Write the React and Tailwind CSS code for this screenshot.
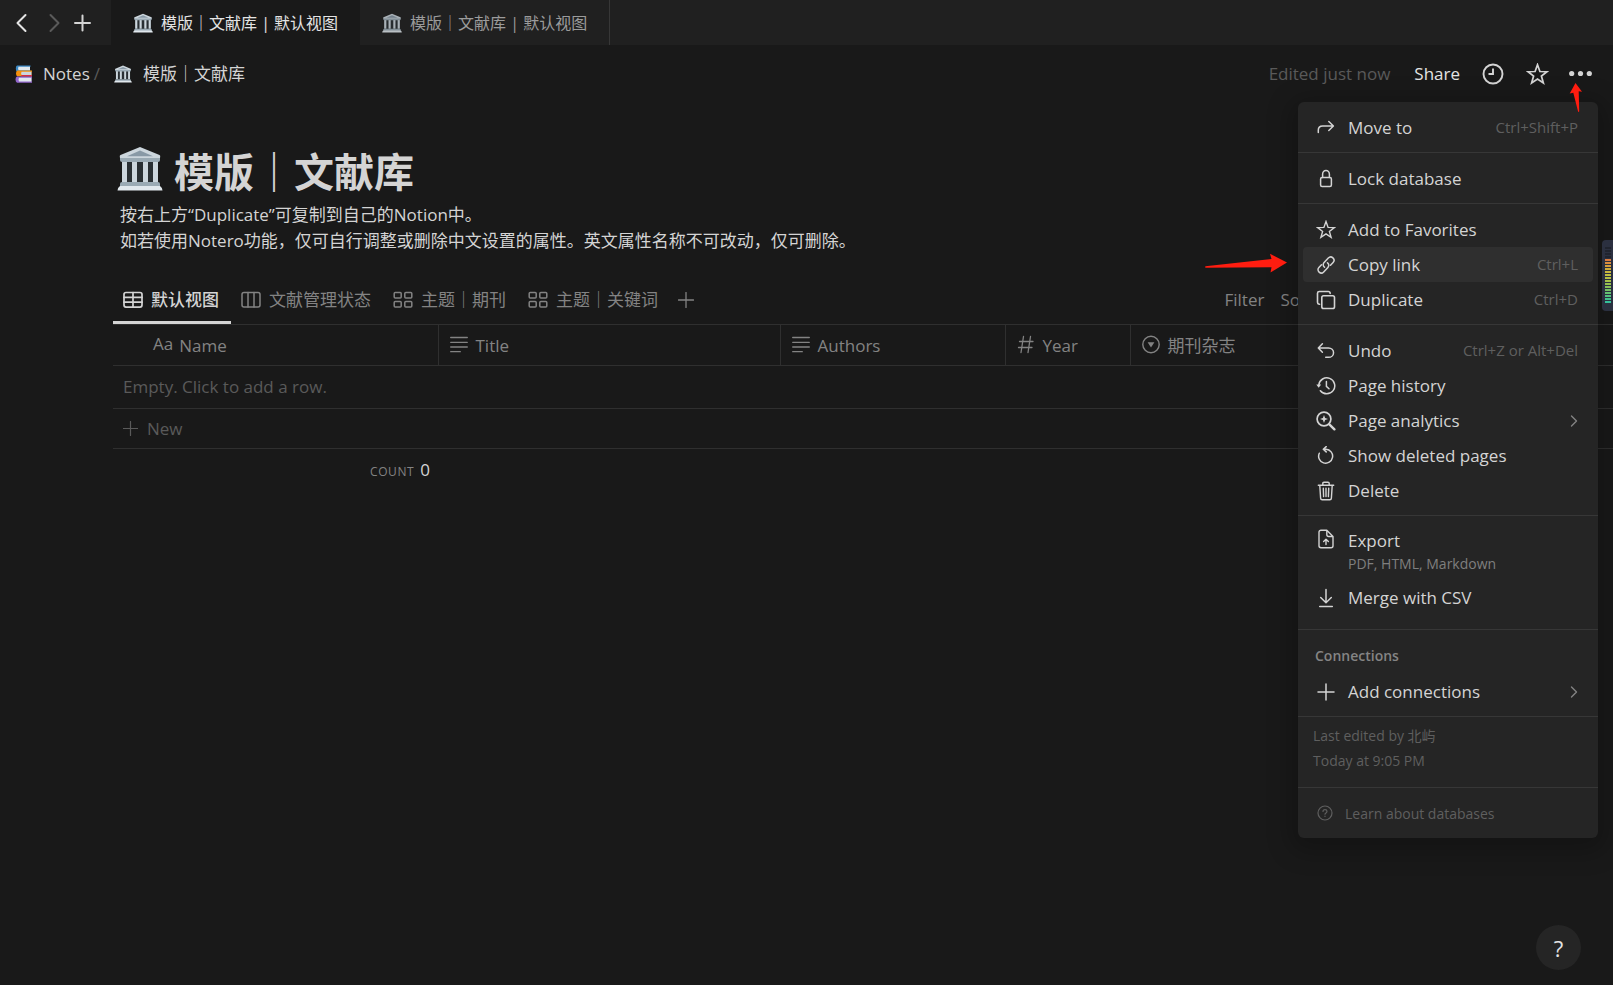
import React from "react";

function Svg({ className = "size-5", box = "0 0 20 20", children, width = 1.5 }) {
  return (
    <svg
      viewBox={box}
      className={`shrink-0 ${className}`}
      fill="none"
      stroke="currentColor"
      strokeWidth={width}
      strokeLinecap="round"
      strokeLinejoin="round"
      aria-hidden="true"
    >
      {children}
    </svg>
  );
}

function Museum({ className }) {
  return (
    <svg viewBox="0 0 46 45" className={`shrink-0 ${className}`} aria-hidden="true">
      <path d="M5 14h36v22H5z" fill="#292F33" />
      <path d="M5 14h5v22H5zM15 14h5v22h-5zM26 14h5v22h-5zM36 14h5v22h-5z" fill="#CCD6DD" />
      <path d="M3 11h40v3q0 2-2 2H5q-2 0-2-2z" fill="#9AAAB4" />
      <path d="M23 1 L42.500 9q1 .6 .7 1.800L43 12H3l-.2-1.200Q2.500 9.600 3.500 9z" fill="#CCD6DD" />
      <path d="M23 4.500 36 10.300H10z" fill="#8899A6" />
      <path d="M5 36h36q2 0 2 2v3H3v-3q0-2 2-2z" fill="#9AAAB4" />
      <path d="M3 40h40q2.500 1.500 2.500 4.500H.5Q.5 41.500 3 40z" fill="#E1E8ED" />
    </svg>
  );
}

function Books({ className }) {
  return (
    <svg viewBox="0 0 18 18" className={`shrink-0 ${className}`} aria-hidden="true">
      <path d="M2 .5h13.500v1.200H15v3.600h.5v1.200H2Q.8 6 .8 3.500T2 .5z" fill="#3B88C3" />
      <path d="M3.500 1.700H15v3.600H3.500Q2.600 3.500 3.500 1.700z" fill="#E1E8ED" />
      <path d="M2.500 5.500H17v1.200h-.5v3.400h.5v1.200H2.500Q1 10.800 1 8.400t1.500-2.900z" fill="#F4900C" />
      <path d="M6.500 6.700h10v3.400h-10q-.8-1.700 0-3.400z" fill="#CCD6DD" />
      <path d="M6.500 10.100H17v1.400H6z" fill="#DD2E44" />
      <path d="M2 11.500h15v1.300h-.5v3.600h.5v1.300H2Q.5 17 .5 14.600T2 11.500z" fill="#9266CC" />
      <path d="M4 12.800h12.500v3.600H4q-1-1.800 0-3.600z" fill="#E1E8ED" />
    </svg>
  );
}

const STAR = "M10 1.500l2.100 5.900 6.200.2-4.900 3.800 1.700 6-5.100-3.500-5.100 3.500 1.700-6-4.900-3.800 6.200-.2z";

const icons = {
  move: (
    <Svg>
      <path d="M2.300 14.500v-2.200q0-4.300 4.300-4.300H17.300M12.800 3.500 17.400 8l-4.600 4.500" />
    </Svg>
  ),
  lock: (
    <Svg>
      <rect x="4.600" y="8.600" width="10.800" height="9" rx="1.500" />
      <path d="M6.600 8.500V5.200a3.400 3.800 0 0 1 6.800 0v3.300" />
    </Svg>
  ),
  star: (
    <Svg>
      <path d={STAR} strokeLinejoin="miter" strokeWidth="1.400" />
    </Svg>
  ),
  link: (
    <Svg>
      <path d="M8.500 12.200c-1.600-1.300-1.700-3.200-.4-4.600l4.200-4.500c1.300-1.400 3.200-1.500 4.600-.2s1.500 3.200.2 4.600l-2.600 2.800" />
      <path d="M11.500 7.800c1.600 1.300 1.700 3.200.4 4.600l-4.200 4.500c-1.300 1.400-3.200 1.500-4.600.2s-1.500-3.200-.2-4.600l2.600-2.800" />
    </Svg>
  ),
  copy: (
    <Svg width={1.600}>
      <rect x="5.800" y="5.800" width="12.700" height="12.700" rx="1.800" />
      <path d="M3.600 14.200H3.200A2 2 0 0 1 1.500 12.200V3.200A1.800 1.800 0 0 1 3.300 1.500h8.900a2 2 0 0 1 2 1.900" />
    </Svg>
  ),
  undo: (
    <Svg>
      <path d="M6.400 2.800 2.300 7l4.100 4.200M2.500 7h10a5 4.600 0 0 1 0 9.300H9.700" />
    </Svg>
  ),
  history: (
    <Svg>
      <path d="M2.800 9a8 8 0 1 1 1.600 5.700M10.400 5.500v4.900l2.600 2.300" />
      <path d="M.3 8.500h4.900L2.700 11.700z" fill="currentColor" stroke="none" />
    </Svg>
  ),
  analytics: (
    <Svg>
      <circle cx="8" cy="8" r="6.900" strokeWidth="1.700" />
      <path d="M13.300 13.300 18.400 18.300" strokeWidth="2.400" />
      <path d="M8 4l1.100 2.900L12 8 9.100 9.100 8 12 6.900 9.100 4 8l2.900-1.100z" fill="currentColor" stroke="none" />
    </Svg>
  ),
  restore: (
    <Svg>
      <path d="M3.300 7.200a7 7 0 1 0 6.700-4H7.300M10.200.6 7.300 3.200l2.900 2.700" />
    </Svg>
  ),
  trash: (
    <Svg width={1.400}>
      <path d="M2.300 4.300h15.400M6.800 4V2.400q0-1.200 1.200-1.200h4q1.200 0 1.200 1.200V4M3.800 4.500l.8 12.600q.1 1.600 1.600 1.600h7.600q1.500 0 1.600-1.600l.8-12.600M7.300 7.300l.3 8.300M10 7.300v8.300M12.700 7.300l-.3 8.300" />
    </Svg>
  ),
  exportFile: (
    <Svg width={1.400}>
      <path d="M5 1.200h5.800l6.200 6.300V16.700a2 2 0 0 1-2 2H5a2 2 0 0 1-2-2V3.200a2 2 0 0 1 2-2zM10.800 1.400v4.200q0 1.900 1.900 1.900h4.200M10 15.600v-5M7.600 12.600 10 10.200l2.400 2.400" />
    </Svg>
  ),
  merge: (
    <Svg>
      <path d="M10 1.500v13M4.700 9.500 10 14.700l5.300-5.200M3.700 18.500h12.600" />
    </Svg>
  ),
  plus: (
    <Svg>
      <path d="M10 2v16M2 10h16" />
    </Svg>
  ),
};

function MenuItem({ icon, label, hint, more, active }) {
  return (
    <li>
      <button
        type="button"
        role="menuitem"
        className={`flex h-[35px] w-full items-center gap-3 rounded pr-[15px] pl-[13px] text-left ${
          active ? "bg-[#2f2f2f]" : ""
        }`}
      >
        {icons[icon]}
        <span className="flex-1 pt-px">{label}</span>
        {hint && <span className="text-[15px] text-[#5f5f5f]">{hint}</span>}
        {more && (
          <Svg className="h-3 w-2 text-[#838383]" box="0 0 8 12" width={1.400}>
            <path d="M1.500 1 6.500 6l-5 5" />
          </Svg>
        )}
      </button>
    </li>
  );
}

function Section({ children }) {
  return <ul className="border-b border-[#373737] px-[5px] pt-2 pb-[7px]">{children}</ul>;
}

function PageMenu() {
  return (
    <div
      role="menu"
      aria-label="Page options"
      className="absolute top-[102px] right-[15px] z-10 w-[300px] rounded-md bg-[#252525] text-[17px] text-[#d4d4d4] shadow-[0_6px_24px_8px_rgba(0,0,0,0.22)]"
    >
      <Section>
        <MenuItem icon="move" label="Move to" hint="Ctrl+Shift+P" />
      </Section>
      <Section>
        <MenuItem icon="lock" label="Lock database" />
      </Section>
      <Section>
        <MenuItem icon="star" label="Add to Favorites" />
        <MenuItem icon="link" label="Copy link" hint="Ctrl+L" active />
        <MenuItem icon="copy" label="Duplicate" hint="Ctrl+D" />
      </Section>
      <Section>
        <MenuItem icon="undo" label="Undo" hint="Ctrl+Z or Alt+Del" />
        <MenuItem icon="history" label="Page history" />
        <MenuItem icon="analytics" label="Page analytics" more />
        <MenuItem icon="restore" label="Show deleted pages" />
        <MenuItem icon="trash" label="Delete" />
      </Section>
      <ul className="border-b border-[#373737] px-[5px] pt-[7px] pb-[14px]">
        <li>
          <button type="button" role="menuitem" className="flex h-[57px] w-full gap-3 pt-1.5 pl-[13px] text-left">
            {icons.exportFile}
            <span className="flex flex-col">
              <span className="leading-6">Export</span>
              <span className="text-sm leading-[22px] text-[#7f7f7f]">PDF, HTML, Markdown</span>
            </span>
          </button>
        </li>
        <MenuItem icon="merge" label="Merge with CSV" />
      </ul>
      <div className="border-b border-[#373737] px-[5px] pt-[15px] pb-[7px]">
        <h2 className="px-3 pb-2 text-sm leading-[21px] font-semibold text-[#848484]">Connections</h2>
        <ul>
          <MenuItem icon="plus" label="Add connections" more />
        </ul>
      </div>
      <div className="border-b border-[#373737] px-[15px] pt-1.5 pb-[14px] text-sm leading-[25px] text-[#5f5f5f]">
        <p>Last edited by 北屿</p>
        <p>Today at 9:05 PM</p>
      </div>
      <a href="#learn" className="flex h-[50px] items-center gap-3 px-[19px] text-sm text-[#5f5f5f]">
        <Svg className="size-4" box="0 0 16 16" width={1.200}>
          <circle cx="8" cy="8" r="7" />
          <path d="M6 6.500q0-1.900 2-1.900t2 1.700q0 1-1 1.600T8 9.200M8 11.200v.2" />
        </Svg>
        <span className="pt-0.5">Learn about databases</span>
      </a>
    </div>
  );
}

const viewIcons = {
  table: (
    <Svg width={1.700}>
      <rect x="1" y="2.500" width="18" height="14.600" rx="2" />
      <path d="M1 7.400h18M1 12.200h18M10 2.500v14.600" />
    </Svg>
  ),
  board: (
    <Svg width={1.500}>
      <rect x="1" y="2.500" width="18" height="14.600" rx="2" />
      <path d="M7 2.500v14.600M13 2.500v14.600" />
    </Svg>
  ),
  gallery: (
    <Svg width={1.500}>
      <rect x="1.200" y="2.500" width="7" height="5.600" rx="1" />
      <rect x="11.800" y="2.500" width="7" height="5.600" rx="1" />
      <rect x="1.200" y="11.500" width="7" height="5.600" rx="1" />
      <rect x="11.800" y="11.500" width="7" height="5.600" rx="1" />
    </Svg>
  ),
};

const views = [
  { icon: "table", label: "默认视图", active: true },
  { icon: "board", label: "文献管理状态" },
  { icon: "gallery", label: "主题｜期刊" },
  { icon: "gallery", label: "主题｜关键词" },
];

const textIcon = (
  <Svg className="h-5 w-[18px]" box="0 0 18 20" width={1.300}>
    <path d="M.7 2.500h16.600M.7 7.300h16.600M.7 12h16.600M.7 16.700h9.600" />
  </Svg>
);

const columns = [
  {
    label: "Title",
    icon: textIcon,
  },
  {
    label: "Authors",
    icon: textIcon,
  },
  {
    label: "Year",
    icon: (
      <Svg className="h-5 w-[18px]" box="0 0 18 20" width={1.300}>
        <path d="M6.500 1.500 4 17.500M13.500 1.500 11 17.500M2.500 6.500H16M1.500 12.500h13.500" />
      </Svg>
    ),
  },
  {
    label: "期刊杂志",
    icon: (
      <Svg className="h-5 w-[18px]" box="0 0 18 20" width={1.400}>
        <circle cx="9" cy="9.500" r="8.200" />
        <path d="M5.600 7.200h6.800L9 12.600z" fill="currentColor" stroke="none" />
      </Svg>
    ),
  },
];

function DatabaseTable() {
  return (
    <table className="w-full table-fixed border-collapse text-[17px]">
      <colgroup>
        <col className="w-[325px]" />
        <col className="w-[342px]" />
        <col className="w-[225px]" />
        <col className="w-[125px]" />
        <col />
      </colgroup>
      <thead>
        <tr className="h-[41px] border-y border-[#2f2f2f] text-[#838383]">
          <th className="pl-10 text-left font-normal">
            <span className="flex items-center gap-1.5">
              <span className="pb-0.5">Aa</span>
              <span className="pt-px">Name</span>
            </span>
          </th>
          {columns.map((c) => (
            <th key={c.label} className="border-l border-[#2f2f2f] pl-[11px] text-left font-normal">
              <span className="flex items-center gap-2">
                {c.icon}
                <span className="pt-px">{c.label}</span>
              </span>
            </th>
          ))}
        </tr>
      </thead>
      <tbody className="text-[#5a5a5a]">
        <tr className="h-[43px] border-b border-[#2f2f2f]">
          <td colSpan={5} className="pl-2.5">
            Empty. Click to add a row.
          </td>
        </tr>
        <tr className="h-10 border-b border-[#2f2f2f]">
          <td colSpan={5}>
            <button type="button" className="flex items-center gap-[9px] pl-2.5">
              <Svg className="size-[15px]" box="0 0 15 15" width={1.200}>
                <path d="M7.500.5v14M.5 7.500h14" />
              </Svg>
              New
            </button>
          </td>
        </tr>
      </tbody>
      <tfoot>
        <tr className="h-[42px]">
          <td className="pr-2 text-right">
            <span className="mr-1.5 text-xs tracking-wider text-[#838383]">COUNT</span>
            <span className="text-[#d4d4d4]">0</span>
          </td>
          <td colSpan={4} />
        </tr>
      </tfoot>
    </table>
  );
}

function WindowTab({ active }) {
  return (
    <button
      type="button"
      role="tab"
      aria-selected={active}
      className={`flex items-center gap-2 px-[22px] text-[16px] ${
        active ? "bg-[#191919] text-[#e4e4e4]" : "border-r border-[#373737] text-[#9b9b9b]"
      }`}
    >
      <Museum className={active ? "size-5" : "size-5 opacity-80"} />
      <span>模版｜文献库 | 默认视图</span>
    </button>
  );
}

const meterColors = [
  "bg-[#20242f]",
  "bg-[#20242f]",
  "bg-[#20242f]",
  "bg-[#20242f]",
  "bg-[#d97b3f]",
  "bg-[#d98c3c]",
  "bg-[#d49d3a]",
  "bg-[#ceab3a]",
  "bg-[#c9b73c]",
  "bg-[#c0be40]",
  "bg-[#b4c043]",
  "bg-[#a6c048]",
  "bg-[#97c04f]",
  "bg-[#86c058]",
  "bg-[#74c063]",
  "bg-[#62c070]",
  "bg-[#52c07d]",
  "bg-[#42c08b]",
  "bg-[#35c09a]",
];

export default function App() {
  return (
    <div className="relative min-h-screen overflow-hidden bg-[#191919] font-['Open_Sans','Noto_Sans_CJK_SC',sans-serif] text-[#d4d4d4]">
      <div className="flex h-[45px] bg-[#202020]">
        <div className="flex w-[111px] items-center pl-3">
          <button type="button" aria-label="Back" className="text-[#e4e4e4]">
            <Svg width={2}>
              <path d="M13.500 2 5.500 10l8 8" />
            </Svg>
          </button>
          <button type="button" aria-label="Forward" className="ml-3 text-[#5a5a5a]">
            <Svg width={2}>
              <path d="M6.500 2l8 8-8 8" />
            </Svg>
          </button>
          <button type="button" aria-label="New tab" className="ml-2 text-[#d4d4d4]">
            <Svg width={2}>
              <path d="M10.500 2.500v15M3 10h15" />
            </Svg>
          </button>
        </div>
        <div role="tablist" className="flex">
          <WindowTab active />
          <WindowTab active={false} />
        </div>
      </div>

      <header className="flex h-[58px] items-center pr-[21px] pl-[15px] text-[17px]">
        <nav aria-label="Breadcrumb" className="flex items-center">
          <a href="#notes" className="flex items-center gap-2.5">
            <Books className="size-[18px]" />
            Notes
          </a>
          <span className="mr-[14px] ml-1 text-[#5a5a5a]">/</span>
          <a href="#library" className="flex items-center gap-[11px]">
            <Museum className="size-[18px]" />
            <span>模版｜文献库</span>
          </a>
        </nav>
        <div className="ml-auto flex items-center">
          <span className="text-[#5a5a5a]">Edited just now</span>
          <button type="button" className="ml-6 text-[#e4e4e4]">
            Share
          </button>
          <button type="button" aria-label="Updates" className="ml-[22px]">
            <Svg className="size-[22px]" box="0 0 22 22" width={1.900}>
              <circle cx="11" cy="11" r="9.500" />
              <path d="M11 5.500V11H6.500" strokeLinecap="butt" strokeLinejoin="miter" />
            </Svg>
          </button>
          <button type="button" aria-label="Favorite" className="ml-[22px]">
            <Svg className="size-[23px]" width={1.500}>
              <path d={STAR} strokeLinejoin="miter" />
            </Svg>
          </button>
          <button type="button" aria-label="More" className="ml-5">
            <svg viewBox="0 0 23 22" className="h-[22px] w-[23px]" fill="currentColor" aria-hidden="true">
              <circle cx="2.700" cy="10.500" r="2.600" />
              <circle cx="11.500" cy="10.500" r="2.600" />
              <circle cx="20.300" cy="10.500" r="2.600" />
            </svg>
          </button>
        </div>
      </header>

      <main className="pl-[113px]">
        <div className="flex items-start gap-[11px] pt-[41px] pl-1">
          <Museum className="mt-0.5 h-[45px] w-[46px]" />
          <h1 className="text-[40px] leading-[56px] font-bold">模版｜文献库</h1>
        </div>
        <p className="mt-0.5 pl-[7px] text-[17px] leading-[26px]">
          按右上方“Duplicate”可复制到自己的Notion中。
          <br />
          如若使用Notero功能，仅可自行调整或删除中文设置的属性。英文属性名称不可改动，仅可删除。
        </p>

        <div className="mt-[21px] flex h-[49px] text-[17px] text-[#838383]">
          <div role="tablist" className="flex">
            {views.map((v) => (
              <button
                key={v.label}
                type="button"
                role="tab"
                aria-selected={Boolean(v.active)}
                className={`flex items-center gap-2 border-b-3 pt-1 pr-3 pl-2.5 ${
                  v.active ? "border-[#d4d4d4] font-medium text-[#d4d4d4]" : "border-transparent"
                }`}
              >
                {viewIcons[v.icon]}
                {v.label}
              </button>
            ))}
          </div>
          <button type="button" aria-label="Add view" className="ml-2 border-b-3 border-transparent pt-1">
            <Svg className="size-4" box="0 0 16 16" width={1.300}>
              <path d="M8 .5v15M.5 8h15" />
            </Svg>
          </button>
          <div className="ml-auto flex gap-4 pr-[300px]">
            <button type="button" className="border-b-3 border-transparent pt-1">
              Filter
            </button>
            <button type="button" className="border-b-3 border-transparent pt-1">
              Sort
            </button>
          </div>
        </div>
        <DatabaseTable />
      </main>

      <PageMenu />

      <svg
        viewBox="0 0 14 30"
        className="absolute top-[83px] right-[30px] z-20 h-[30px] w-[14px]"
        fill="#ff1d10"
        aria-hidden="true"
      >
        <path d="M6.500 0 13 8.700 9.700 8.300 10.200 28.500 9.200 29 4.300 9.700.7 10.600z" />
      </svg>
      <svg
        viewBox="0 0 82 20"
        className="absolute top-[253px] right-[326px] z-20 h-5 w-[82px]"
        fill="#ff1d10"
        aria-hidden="true"
      >
        <path d="M82 9.500 65 .8 66.500 6 .3 13.200.3 14.800 66.500 14.200 65.500 19.500z" />
      </svg>

      <div
        aria-hidden="true"
        className="absolute top-[240px] right-0 z-20 flex h-[71px] w-[11px] flex-col gap-px rounded-l bg-[#2b3040] py-[7px] pr-0.5 pl-[3px]"
      >
        {meterColors.map((c, i) => (
          <span key={i} className={`h-0.5 shrink-0 ${c}`} />
        ))}
      </div>

      <button
        type="button"
        aria-label="Help"
        className="absolute right-8 bottom-[15px] flex size-[45px] items-center justify-center rounded-full bg-[#252525] pt-0.5 text-[22px] font-medium text-[#e4e4e4]"
      >
        ?
      </button>
    </div>
  );
}
